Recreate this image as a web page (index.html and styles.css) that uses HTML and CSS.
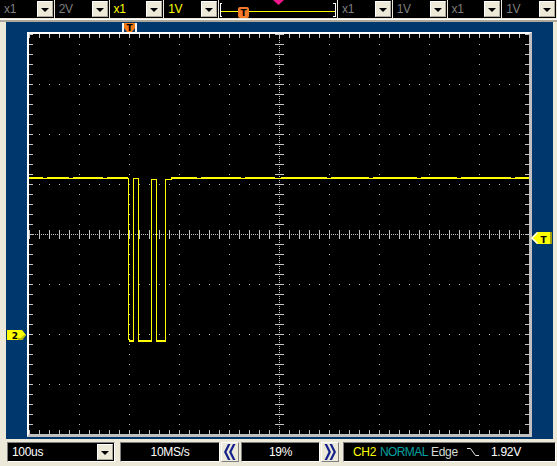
FILE: index.html
```html
<!DOCTYPE html>
<html lang="en">
<head>
  <meta charset="UTF-8">
  <title>Scope</title>
  <link rel="stylesheet" href="styles.css">
</head>
<body>
  <div class="toolbar">
    <div class="combo"><span class="val off">x1</span><span class="drop"><i class="arrow"></i></span></div>
    <div class="combo"><span class="val off">2V</span><span class="drop"><i class="arrow"></i></span></div>
    <div class="combo"><span class="val on">x1</span><span class="drop"><i class="arrow"></i></span></div>
    <div class="combo"><span class="val on">1V</span><span class="drop"><i class="arrow"></i></span></div>
    <div class="slider">
      <svg width="118" height="18" viewBox="0 0 118 18" shape-rendering="crispEdges">
        <path d="M3 3.5H1.5V16.5H3" fill="none" stroke="#ffffff"/>
        <path d="M114 3.5H116.5V16.5H114" fill="none" stroke="#ffffff"/>
        <line x1="2" y1="11.5" x2="116" y2="11.5" stroke="#ffff00"/>
        <rect x="19" y="7" width="11" height="11" rx="2" fill="#f47a2a" shape-rendering="auto"/>
        <text x="24.5" y="16" class="tag">T</text>
        <polygon points="54,0 65,0 59.5,5" fill="#f0168c" shape-rendering="auto"/>
      </svg>
    </div>
    <div class="combo"><span class="val off">x1</span><span class="drop"><i class="arrow"></i></span></div>
    <div class="combo"><span class="val off">1V</span><span class="drop"><i class="arrow"></i></span></div>
    <div class="combo"><span class="val off">x1</span><span class="drop"><i class="arrow"></i></span></div>
    <div class="combo"><span class="val off">1V</span><span class="drop"><i class="arrow"></i></span></div>
  </div>
  <div class="shade"></div>

  <div class="screen">
    <div class="frame">
      <svg width="500" height="400" viewBox="0 0 500 400" shape-rendering="crispEdges">
        <g class="dots" stroke="#bdbdbd" stroke-dasharray="1 9">
          <line x1="50.5" y1="0" x2="50.5" y2="400"/>
          <line x1="100.5" y1="0" x2="100.5" y2="400"/>
          <line x1="150.5" y1="0" x2="150.5" y2="400"/>
          <line x1="200.5" y1="0" x2="200.5" y2="400"/>
          <line x1="300.5" y1="0" x2="300.5" y2="400"/>
          <line x1="350.5" y1="0" x2="350.5" y2="400"/>
          <line x1="400.5" y1="0" x2="400.5" y2="400"/>
          <line x1="450.5" y1="0" x2="450.5" y2="400"/>
          <line x1="0" y1="50.5" x2="500" y2="50.5"/>
          <line x1="0" y1="100.5" x2="500" y2="100.5"/>
          <line x1="0" y1="150.5" x2="500" y2="150.5"/>
          <line x1="0" y1="250.5" x2="500" y2="250.5"/>
          <line x1="0" y1="300.5" x2="500" y2="300.5"/>
          <line x1="0" y1="350.5" x2="500" y2="350.5"/>
        </g>
        <g stroke="#c4c4c4">
          <line x1="250.5" y1="0" x2="250.5" y2="400" stroke-dasharray="1 1"/>
          <line x1="0" y1="200.5" x2="500" y2="200.5" stroke-dasharray="1 1"/>
          <line x1="250.5" y1="0" x2="250.5" y2="400" stroke-width="9" stroke-dasharray="1 9"/>
          <line x1="0" y1="200.5" x2="500" y2="200.5" stroke-width="9" stroke-dasharray="1 9"/>
          <line x1="0" y1="2" x2="500" y2="2" stroke-width="4" stroke-dasharray="1 9"/>
          <line x1="0" y1="398" x2="500" y2="398" stroke-width="4" stroke-dasharray="1 9"/>
          <line x1="2" y1="0" x2="2" y2="400" stroke-width="4" stroke-dasharray="1 9"/>
          <line x1="498" y1="0" x2="498" y2="400" stroke-width="4" stroke-dasharray="1 9"/>
        </g>
        <g fill="#ffff00">
          <rect x="0" y="143" width="14" height="1"/>
          <rect x="18" y="143" width="22" height="1"/>
          <rect x="44" y="143" width="30" height="1"/>
          <rect x="78" y="143" width="21" height="1"/>
          <rect x="100" y="306" width="4" height="1"/>
          <rect x="110" y="306" width="12" height="1"/>
          <rect x="128" y="306" width="8" height="1"/>
          <rect x="142" y="143" width="26" height="1"/>
          <rect x="172" y="143" width="40" height="1"/>
          <rect x="216" y="143" width="30" height="1"/>
          <rect x="252" y="143" width="46" height="1"/>
          <rect x="302" y="143" width="38" height="1"/>
          <rect x="344" y="143" width="44" height="1"/>
          <rect x="392" y="143" width="36" height="1"/>
          <rect x="432" y="143" width="50" height="1"/>
          <rect x="486" y="143" width="14" height="1"/>
        </g>
        <polyline fill="none" stroke="#ffff00" points="0,144.5 99.5,144.5 99.5,305.5 100.5,305.5 100.5,307.5 104.5,307.5 104.5,144.5 109.5,144.5 109.5,307.5 122.5,307.5 122.5,145.5 127.5,145.5 127.5,307.5 136.5,307.5 136.5,145.5 142,145.5 142,144.5 500,144.5"/>
      </svg>
    </div>

    <div class="mark mark-trig">
      <svg width="15" height="10" viewBox="0 0 15 10">
        <rect x="0" y="0" width="2" height="10" fill="#f4f2ea"/>
        <rect x="13" y="0" width="2" height="10" fill="#f4f2ea"/>
        <polygon points="2,0 13,0 13,5 10,9 5,9 2,5" fill="#f47a14"/>
        <text x="7.5" y="8" class="tag">T</text>
      </svg>
    </div>
    <div class="mark mark-ch2">
      <svg width="20" height="10" viewBox="0 0 20 10">
        <polygon points="0,0 15,0 19,5 15,10 0,10" fill="#ffff00"/>
        <polygon points="11,10 15,10 19,5 17,5 14,8 11,8" fill="#b8b800"/>
        <text x="8" y="9" class="tag">2</text>
      </svg>
    </div>
    <div class="mark mark-level">
      <svg width="21" height="12" viewBox="0 0 21 12">
        <polygon points="6,0 21,0 21,12 6,12 0,6" fill="#ffff00"/>
        <polyline points="6.5,0.5 1,6 6.5,11.5" fill="none" stroke="#ffffff" stroke-width="1.4"/>
        <rect x="19" y="0" width="2" height="12" fill="#a0a000"/>
        <text x="12.5" y="10.5" class="tag">T</text>
      </svg>
    </div>
  </div>

  <div class="statusbar">
    <div class="combo sunk"><span class="val wide">100us</span><span class="drop"><i class="arrow"></i></span></div>
    <div class="field rate">10MS/s</div>
    <div class="step">
      <svg width="12" height="16" viewBox="0 0 12 16">
        <polygon points="4,0 6.5,0 2.5,8 6.5,16 4,16 0,8" fill="#14238c"/>
        <polygon points="9,0 11.5,0 7.5,8 11.5,16 9,16 5,8" fill="#14238c"/>
      </svg>
    </div>
    <div class="field pos">19%</div>
    <div class="step">
      <svg width="12" height="16" viewBox="0 0 12 16">
        <polygon points="0.5,0 3,0 7,8 3,16 0.5,16 4.5,8" fill="#14238c"/>
        <polygon points="5.5,0 8,0 12,8 8,16 5.5,16 9.5,8" fill="#14238c"/>
      </svg>
    </div>
    <div class="field info">
      <span class="ch">CH2</span>
      <span class="mode">NORMAL</span>
      <span class="kind">Edge</span>
      <span class="slope">
        <svg width="12" height="10" viewBox="0 0 12 10">
          <path d="M0 1.5H3.5L8.5 8.5H12" fill="none" stroke="#e6e6e6"/>
        </svg>
      </span>
      <span class="level">1.92V</span>
    </div>
  </div>
</body>
</html>
```

FILE: styles.css
```css
* {
  margin: 0;
  padding: 0;
  box-sizing: border-box;
}

body {
  width: 557px;
  height: 466px;
  overflow: hidden;
  background: #ece9d8;
  font-family: 'Liberation Sans', Arial, sans-serif;
  font-size: 12px;
}

.toolbar {
  display: flex;
  height: 20px;
  background: #ece9d8;
  border-bottom: 1px solid #ffffff;
}

.combo {
  display: flex;
  width: 54px;
  height: 18px;
  margin-right: 1px;
  background: #000000;
}

.val {
  flex: 1;
  padding-left: 4px;
  line-height: 18px;
  white-space: nowrap;
  letter-spacing: -0.3px;
}

.off { color: #7f7f7f; }
.on { color: #ffff00; }

.drop {
  display: flex;
  align-items: center;
  justify-content: center;
  width: 16px;
  height: 16px;
  margin: 1px 1px 1px 0;
  background: #ece9d8;
  border: 1px solid;
  border-color: #ffffff #aca899 #aca899 #ffffff;
}

.arrow {
  width: 0;
  height: 0;
  border-left: 4px solid transparent;
  border-right: 4px solid transparent;
  border-top: 4px solid #000000;
  margin-top: 1px;
}

.slider {
  width: 118px;
  height: 18px;
  margin-right: 1px;
  background: #000000;
}

.slider svg, .mark svg, .step svg, .slope svg {
  display: block;
}

.tag {
  font-family: 'DejaVu Sans', sans-serif;
  font-size: 9px;
  font-weight: bold;
  fill: #000000;
  text-anchor: middle;
}

.shade {
  height: 2px;
  background: #aca899;
}

.screen {
  position: relative;
  width: 547px;
  height: 417px;
  margin-left: 6px;
  padding: 10px 21px 2px 21px;
  background: #00386e;
}

.frame {
  width: 505px;
  height: 405px;
  background: #000000;
  border-style: solid;
  border-width: 2px 3px 3px 2px;
  border-color: #ffffff #c0c0c0 #c0c0c0 #ffffff;
}

.frame svg {
  display: block;
}

.mark {
  position: absolute;
}

.mark-trig {
  left: 116px;
  top: 1px;
}

.mark-ch2 {
  left: 1px;
  top: 308px;
}

.mark-level {
  left: 525px;
  top: 210px;
}

.statusbar {
  display: flex;
  height: 26px;
  padding: 3px 0 3px 7px;
}

.statusbar .combo.sunk {
  width: 108px;
  height: 20px;
  margin-right: 5px;
  border: 1px solid;
  border-color: #808080 #ffffff #ffffff #808080;
}

.statusbar .val.wide {
  color: #ffffff;
  line-height: 18px;
  padding-left: 4px;
}

.field {
  height: 20px;
  background: #000000;
  color: #ffffff;
  line-height: 18px;
  border: 1px solid;
  border-color: #808080 #ffffff #ffffff #808080;
  white-space: nowrap;
  letter-spacing: -0.3px;
}

.rate {
  width: 100px;
  margin-right: 1px;
  text-align: center;
}

.pos {
  width: 79px;
  margin-right: 1px;
  text-align: center;
}

.step {
  display: flex;
  align-items: center;
  justify-content: center;
  width: 18px;
  height: 20px;
  margin-right: 2px;
  background: #ece9d8;
  border: 1px solid;
  border-color: #ffffff #808080 #808080 #ffffff;
}

.pos + .step {
  margin-right: 4px;
}

.info {
  display: flex;
  width: 213px;
  padding-left: 9px;
}

.info span {
  display: block;
}

.ch { width: 27px; color: #ffff00; }
.mode { width: 51px; color: #00a0a0; letter-spacing: -0.6px; }
.kind { width: 36px; color: #d4dcd4; }
.slope { width: 24px; padding-top: 4px; }
.level { color: #ffffff; }
```
